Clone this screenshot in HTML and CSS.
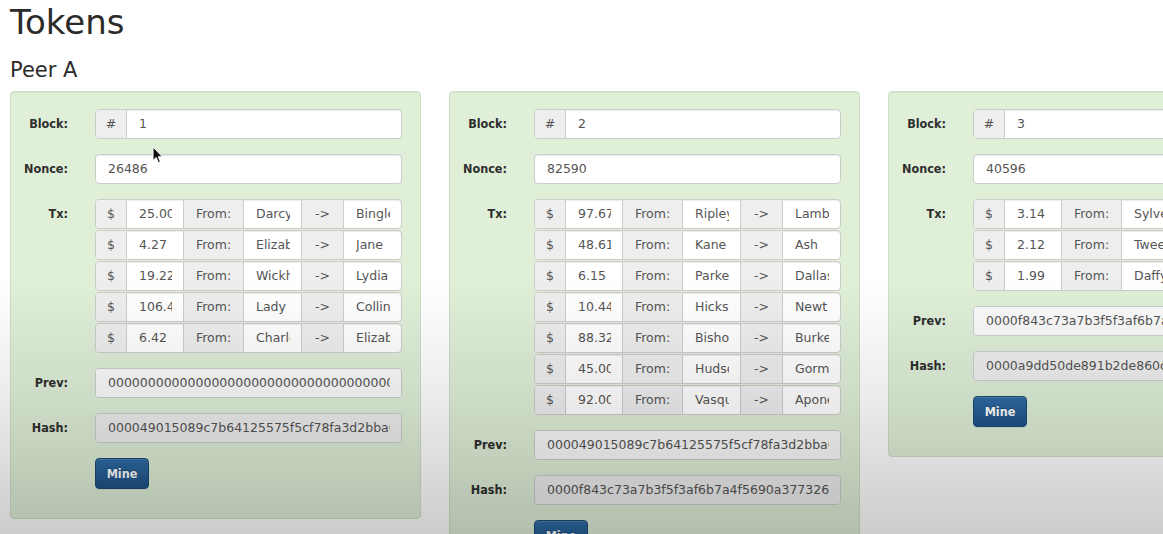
FILE: index.html
```html
<!DOCTYPE html>
<html lang="en">
<head>
<meta charset="utf-8">
<title>Tokens</title>
<link rel="stylesheet" href="styles.css">
</head>
<body>
<h1 class="title">Tokens</h1>
<h2 class="peer">Peer A</h2>
<div class="chain">

  <div class="card">
    <div class="group">
      <div class="label">Block:</div>
      <div class="field">
        <div class="row single">
          <div class="addon w-sym">#</div>
          <div class="cell grow"><span class="val">1</span></div>
        </div>
      </div>
    </div>
    <div class="group">
      <div class="label">Nonce:</div>
      <div class="field">
        <div class="row single"><div class="cell grow"><span class="val">26486</span></div></div>
      </div>
    </div>
    <div class="group">
      <div class="label">Tx:</div>
      <div class="field txs">
        <div class="row"><div class="addon w-sym">$</div><div class="cell w-amt"><span class="val">25.00</span></div><div class="addon w-from">From:</div><div class="cell w-name"><span class="val">Darcy</span></div><div class="addon w-arrow">-&gt;</div><div class="cell grow"><span class="val">Bingley</span></div></div>
        <div class="row"><div class="addon w-sym">$</div><div class="cell w-amt"><span class="val">4.27</span></div><div class="addon w-from">From:</div><div class="cell w-name"><span class="val">Elizabeth</span></div><div class="addon w-arrow">-&gt;</div><div class="cell grow"><span class="val">Jane</span></div></div>
        <div class="row"><div class="addon w-sym">$</div><div class="cell w-amt"><span class="val">19.22</span></div><div class="addon w-from">From:</div><div class="cell w-name"><span class="val">Wickham</span></div><div class="addon w-arrow">-&gt;</div><div class="cell grow"><span class="val">Lydia</span></div></div>
        <div class="row"><div class="addon w-sym">$</div><div class="cell w-amt"><span class="val">106.47</span></div><div class="addon w-from">From:</div><div class="cell w-name"><span class="val">Lady Catherine</span></div><div class="addon w-arrow">-&gt;</div><div class="cell grow"><span class="val">Collins</span></div></div>
        <div class="row"><div class="addon w-sym">$</div><div class="cell w-amt"><span class="val">6.42</span></div><div class="addon w-from">From:</div><div class="cell w-name"><span class="val">Charlotte</span></div><div class="addon w-arrow">-&gt;</div><div class="cell grow"><span class="val">Elizabeth</span></div></div>
      </div>
    </div>
    <div class="group">
      <div class="label">Prev:</div>
      <div class="field">
        <div class="row single prev"><div class="cell grow"><span class="val">0000000000000000000000000000000000000000000000000000000000000000</span></div></div>
      </div>
    </div>
    <div class="group">
      <div class="label">Hash:</div>
      <div class="field">
        <div class="row single hash"><div class="cell grow"><span class="val">000049015089c7b64125575f5cf78fa3d2bba0ae2d8d3ac7ba0a4e3e4a0b12cd</span></div></div>
      </div>
    </div>
    <div class="group">
      <div class="label"></div>
      <div class="field"><button class="mine" type="button">Mine</button></div>
    </div>
  </div>

  <div class="card">
    <div class="group">
      <div class="label">Block:</div>
      <div class="field">
        <div class="row single">
          <div class="addon w-sym">#</div>
          <div class="cell grow"><span class="val">2</span></div>
        </div>
      </div>
    </div>
    <div class="group">
      <div class="label">Nonce:</div>
      <div class="field">
        <div class="row single"><div class="cell grow"><span class="val">82590</span></div></div>
      </div>
    </div>
    <div class="group">
      <div class="label">Tx:</div>
      <div class="field txs">
        <div class="row"><div class="addon w-sym">$</div><div class="cell w-amt"><span class="val">97.67</span></div><div class="addon w-from">From:</div><div class="cell w-name"><span class="val">Ripley</span></div><div class="addon w-arrow">-&gt;</div><div class="cell grow"><span class="val">Lambert</span></div></div>
        <div class="row"><div class="addon w-sym">$</div><div class="cell w-amt"><span class="val">48.61</span></div><div class="addon w-from">From:</div><div class="cell w-name"><span class="val">Kane</span></div><div class="addon w-arrow">-&gt;</div><div class="cell grow"><span class="val">Ash</span></div></div>
        <div class="row"><div class="addon w-sym">$</div><div class="cell w-amt"><span class="val">6.15</span></div><div class="addon w-from">From:</div><div class="cell w-name"><span class="val">Parker</span></div><div class="addon w-arrow">-&gt;</div><div class="cell grow"><span class="val">Dallas</span></div></div>
        <div class="row"><div class="addon w-sym">$</div><div class="cell w-amt"><span class="val">10.44</span></div><div class="addon w-from">From:</div><div class="cell w-name"><span class="val">Hicks</span></div><div class="addon w-arrow">-&gt;</div><div class="cell grow"><span class="val">Newt</span></div></div>
        <div class="row"><div class="addon w-sym">$</div><div class="cell w-amt"><span class="val">88.32</span></div><div class="addon w-from">From:</div><div class="cell w-name"><span class="val">Bishop</span></div><div class="addon w-arrow">-&gt;</div><div class="cell grow"><span class="val">Burke</span></div></div>
        <div class="row"><div class="addon w-sym">$</div><div class="cell w-amt"><span class="val">45.00</span></div><div class="addon w-from">From:</div><div class="cell w-name"><span class="val">Hudson</span></div><div class="addon w-arrow">-&gt;</div><div class="cell grow"><span class="val">Gorman</span></div></div>
        <div class="row"><div class="addon w-sym">$</div><div class="cell w-amt"><span class="val">92.00</span></div><div class="addon w-from">From:</div><div class="cell w-name"><span class="val">Vasquez</span></div><div class="addon w-arrow">-&gt;</div><div class="cell grow"><span class="val">Apone</span></div></div>
      </div>
    </div>
    <div class="group">
      <div class="label">Prev:</div>
      <div class="field">
        <div class="row single prev"><div class="cell grow"><span class="val">000049015089c7b64125575f5cf78fa3d2bba0ae2d8d3ac7ba0a4e3e4a0b12cd</span></div></div>
      </div>
    </div>
    <div class="group">
      <div class="label">Hash:</div>
      <div class="field">
        <div class="row single hash"><div class="cell grow"><span class="val">0000f843c73a7b3f5f3af6b7a4f5690a377326e1d0b1c6a2f8e4d9c3b7a51e02</span></div></div>
      </div>
    </div>
    <div class="group">
      <div class="label"></div>
      <div class="field"><button class="mine" type="button">Mine</button></div>
    </div>
  </div>

  <div class="card">
    <div class="group">
      <div class="label">Block:</div>
      <div class="field">
        <div class="row single">
          <div class="addon w-sym">#</div>
          <div class="cell grow"><span class="val">3</span></div>
        </div>
      </div>
    </div>
    <div class="group">
      <div class="label">Nonce:</div>
      <div class="field">
        <div class="row single"><div class="cell grow"><span class="val">40596</span></div></div>
      </div>
    </div>
    <div class="group">
      <div class="label">Tx:</div>
      <div class="field txs">
        <div class="row"><div class="addon w-sym">$</div><div class="cell w-amt"><span class="val">3.14</span></div><div class="addon w-from">From:</div><div class="cell w-name"><span class="val">Sylvester</span></div><div class="addon w-arrow">-&gt;</div><div class="cell grow"><span class="val">Tweety</span></div></div>
        <div class="row"><div class="addon w-sym">$</div><div class="cell w-amt"><span class="val">2.12</span></div><div class="addon w-from">From:</div><div class="cell w-name"><span class="val">Tweety</span></div><div class="addon w-arrow">-&gt;</div><div class="cell grow"><span class="val">Daffy</span></div></div>
        <div class="row"><div class="addon w-sym">$</div><div class="cell w-amt"><span class="val">1.99</span></div><div class="addon w-from">From:</div><div class="cell w-name"><span class="val">Daffy</span></div><div class="addon w-arrow">-&gt;</div><div class="cell grow"><span class="val">Bugs</span></div></div>
      </div>
    </div>
    <div class="group">
      <div class="label">Prev:</div>
      <div class="field">
        <div class="row single prev"><div class="cell grow"><span class="val">0000f843c73a7b3f5f3af6b7a4f5690a377326e1d0b1c6a2f8e4d9c3b7a51e02</span></div></div>
      </div>
    </div>
    <div class="group">
      <div class="label">Hash:</div>
      <div class="field">
        <div class="row single hash"><div class="cell grow"><span class="val">0000a9dd50de891b2de860c2e4f7a1b93d5c8e2f6a0b4d7c9e1f3a5b7c9d0e2f</span></div></div>
      </div>
    </div>
    <div class="group">
      <div class="label"></div>
      <div class="field"><button class="mine" type="button">Mine</button></div>
    </div>
  </div>

</div>

<svg class="cursor" width="12" height="18" viewBox="0 0 12 18" aria-hidden="true">
  <path d="M1 1 L1 14.5 L4.2 11.6 L6.4 16.6 L8.4 15.7 L6.3 10.8 L10.4 10.8 Z" fill="#111" stroke="#fff" stroke-width="1" stroke-linejoin="round"/>
</svg>
<div class="vignette"></div>
</body>
</html>
```

FILE: styles.css
```css
html, body {
  margin: 0;
  padding: 0;
}

body {
  background: #ffffff;
  color: #333333;
  font-family: "DejaVu Sans", "Open Sans", sans-serif;
  font-size: 12.5px;
  padding: 0 10px;
  overflow: hidden;
  height: 534px;
  position: relative;
}

.title {
  font-size: 34px;
  font-weight: normal;
  line-height: 40px;
  margin: 2px 0 0;
  color: #2b2b2b;
}

.peer {
  font-size: 21px;
  font-weight: normal;
  line-height: 26px;
  margin: 15px 0 8px;
  color: #2b2b2b;
}

.chain {
  display: flex;
  align-items: flex-start;
  gap: 28px;
}

.card {
  flex: 0 0 411px;
  width: 411px;
  min-width: 0;
  box-sizing: border-box;
  background: #dfefd8;
  border: 1px solid #cfe0c7;
  border-radius: 4px;
  box-shadow: inset 0 1px 1px rgba(0, 0, 0, 0.05);
  padding: 17px 18px 14px 0;
}

.group {
  display: flex;
  align-items: flex-start;
  gap: 27px;
  margin-bottom: 15px;
}

.label {
  flex: 0 0 57px;
  text-align: right;
  font-family: "DejaVu Sans Condensed", "DejaVu Sans", sans-serif;
  font-weight: bold;
  font-size: 12.5px;
  line-height: 30px;
  color: #2e2e2e;
}

.field {
  flex: 0 0 307px;
  width: 307px;
  min-width: 0;
  display: flex;
  flex-direction: column;
}

.txs {
  gap: 1px;
}

.row {
  display: flex;
  height: 30px;
  box-sizing: border-box;
  border: 1px solid #cccccc;
  border-radius: 4px;
  overflow: hidden;
  background: #ffffff;
  box-shadow: inset 0 1px 1px rgba(0, 0, 0, 0.075);
}

.addon,
.cell {
  box-sizing: border-box;
  height: 28px;
  line-height: 28px;
  color: #555555;
  min-width: 0;
  overflow: hidden;
  white-space: nowrap;
}

.addon {
  background: #eeeeee;
  text-align: center;
  border-right: 1px solid #cccccc;
}

.cell {
  padding: 0 11px 0 12px;
  border-right: 1px solid #cccccc;
}

.cell:last-child {
  border-right: 0;
}

.val {
  display: block;
  overflow: hidden;
  white-space: nowrap;
}

.w-sym { flex: 0 0 31px; }
.w-amt { flex: 0 0 57px; }
.w-from { flex: 0 0 60px; }
.w-name { flex: 0 0 58px; }
.w-arrow { flex: 0 0 42px; }
.grow { flex: 1 1 0; }

.prev,
.prev .cell {
  background: #fafafa;
}

.hash,
.hash .cell {
  background: #eeeeee;
}

.mine {
  align-self: flex-start;
  width: 54px;
  height: 31px;
  border: 1px solid #1c4a75;
  border-radius: 4px;
  background: linear-gradient(to bottom, #2f6da6 0%, #1f5184 100%);
  color: #ffffff;
  font-family: "DejaVu Sans Condensed", "DejaVu Sans", sans-serif;
  font-weight: bold;
  font-size: 12.5px;
  text-shadow: 0 -1px 0 rgba(0, 0, 0, 0.2);
  padding: 0;
  box-shadow: inset 0 1px 0 rgba(255, 255, 255, 0.15), 0 1px 1px rgba(0, 0, 0, 0.075);
}

.cursor {
  position: absolute;
  left: 152px;
  top: 146px;
}

.vignette {
  position: fixed;
  left: 0;
  top: 0;
  width: 100%;
  height: 100%;
  pointer-events: none;
  background: linear-gradient(to bottom, rgba(0, 0, 0, 0) 0, rgba(0, 0, 0, 0) 280px, rgba(0, 0, 0, 0.08) 400px, rgba(0, 0, 0, 0.2) 534px);
}
```
